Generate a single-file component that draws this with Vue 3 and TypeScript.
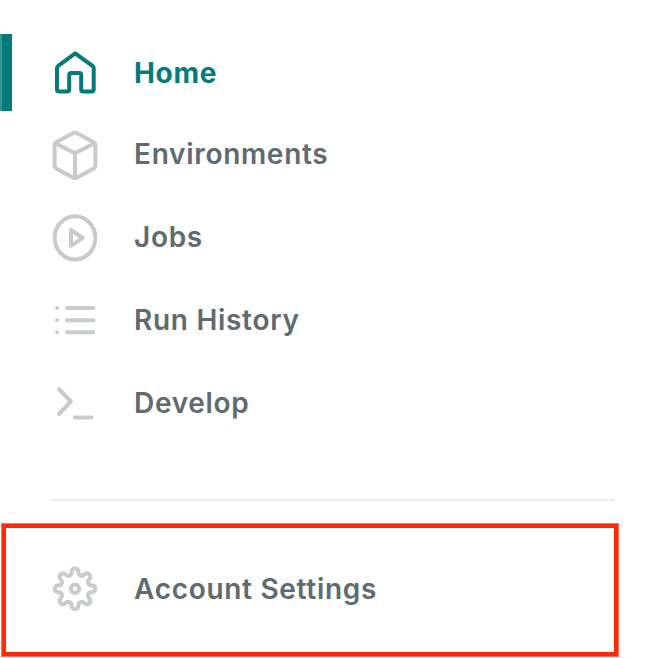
<script setup lang="ts">
interface NavItem {
  label: string
  icon: 'home' | 'cube' | 'play' | 'list' | 'prompt'
  active?: boolean
}

const items: NavItem[] = [
  { label: 'Home', icon: 'home', active: true },
  { label: 'Environments', icon: 'cube' },
  { label: 'Jobs', icon: 'play' },
  { label: 'Run History', icon: 'list' },
  { label: 'Develop', icon: 'prompt' },
]

// Outline of an eight-toothed gear as a smooth polar wave with blunt teeth
function gearOutline(cx: number, cy: number, mid: number, depth: number): string {
  const points: string[] = []
  for (let deg = 0; deg < 360; deg += 3) {
    const a = (deg * Math.PI) / 180
    const r = mid + depth * Math.cos(8 * a)
    const t = a + 0.035 * Math.sin(16 * a)
    points.push(`${(cx + r * Math.sin(t)).toFixed(2)} ${(cy - r * Math.cos(t)).toFixed(2)}`)
  }
  return `M${points.join('L')}Z`
}

const gear = gearOutline(25, 24.8, 17.3, 3)
</script>

<template>
  <nav class="sidebar">
    <a v-for="item in items" :key="item.label" class="item" :class="{ active: item.active }">
      <svg class="icon" viewBox="0 0 50 50" aria-hidden="true">
        <path
          v-if="item.icon === 'home'"
          d="M25.2 5.3L8.2 17.9Q7 18.8 7 20.3V41.5Q7 43.5 9 43.5H17.2Q19.2 43.5 19.2 41.5V27Q19.2 25 21.2 25H29.2Q31.2 25 31.2 27V41.5Q31.2 43.5 33.2 43.5H41.7Q43.7 43.5 43.7 41.5V20.3Q43.7 18.8 42.5 17.9Z"
        />
        <template v-else-if="item.icon === 'cube'">
          <path d="M23.4 4.1Q25 3.3 26.6 4.1L43.8 13.2Q45.4 14.1 45.4 16V36.8Q45.4 38.6 43.8 39.5L26.6 48.7Q25 49.5 23.4 48.7L6.2 39.5Q4.6 38.6 4.6 36.8V16Q4.6 14.1 6.2 13.2Z" />
          <path d="M5.5 14.3L25 24.2L44.5 14.3M25 24.2V49" />
        </template>
        <template v-else-if="item.icon === 'play'">
          <ellipse cx="25" cy="25.8" rx="20.4" ry="21.6" />
          <path d="M21 17.8V33.8L32.8 25.8Z" />
        </template>
        <template v-else-if="item.icon === 'list'">
          <path d="M7 13H7.01M7 25.2H7.01M7 37.3H7.01M17 13H43.4M17 25.2H43.4M17 37.3H43.4" />
        </template>
        <path v-else d="M9 11L20.9 23.5L9 36M25 39.4H41.5" />
      </svg>
      <span class="label">{{ item.label }}</span>
    </a>
    <hr class="divider" />
    <a class="item settings">
      <svg class="icon" viewBox="0 0 50 50" aria-hidden="true">
        <path :d="gear" />
        <circle cx="25" cy="24.8" r="4.2" />
      </svg>
      <span class="label">Account Settings</span>
    </a>
  </nav>
</template>

<style>
body {
  margin: 0;
  background: #fefefe;
}
</style>

<style scoped>
.sidebar {
  box-sizing: border-box;
  display: flex;
  flex-direction: column;
  width: 654px;
  height: 658px;
  padding-top: 34px;
  font-family: Inter, 'Liberation Sans', sans-serif;
  font-size: 28px;
  font-weight: 600;
  line-height: 34px;
  letter-spacing: 0.7px;
  color: #5f6a71;
}

.item {
  box-sizing: border-box;
  display: flex;
  align-items: center;
  flex: none;
  gap: 34px;
  height: 83.25px;
  padding-left: 50px;
}

.active {
  height: 77px;
  margin-bottom: 1px;
  background: linear-gradient(to right, #379594 2px, #047b7a 2px) no-repeat left / 12px 100%;
  font-weight: 700;
  color: #047b7a;
}

.icon {
  flex: none;
  width: 50px;
  height: 50px;
  overflow: visible;
  fill: none;
  stroke: #c7cbce;
  stroke-width: 4;
  stroke-linecap: round;
  stroke-linejoin: round;
}

.active .icon {
  stroke: #047b7a;
}

.divider {
  flex: none;
  width: 564px;
  height: 2px;
  margin: 54px 0 23px 51px;
  border: 0;
  background: #ededed;
}

.settings {
  width: 616px;
  height: 132px;
  margin-left: 2px;
  padding: 0 0 3px 44px;
  border: 4px solid #ff2a05;
  outline: 1px solid #ff7159;
}
</style>
